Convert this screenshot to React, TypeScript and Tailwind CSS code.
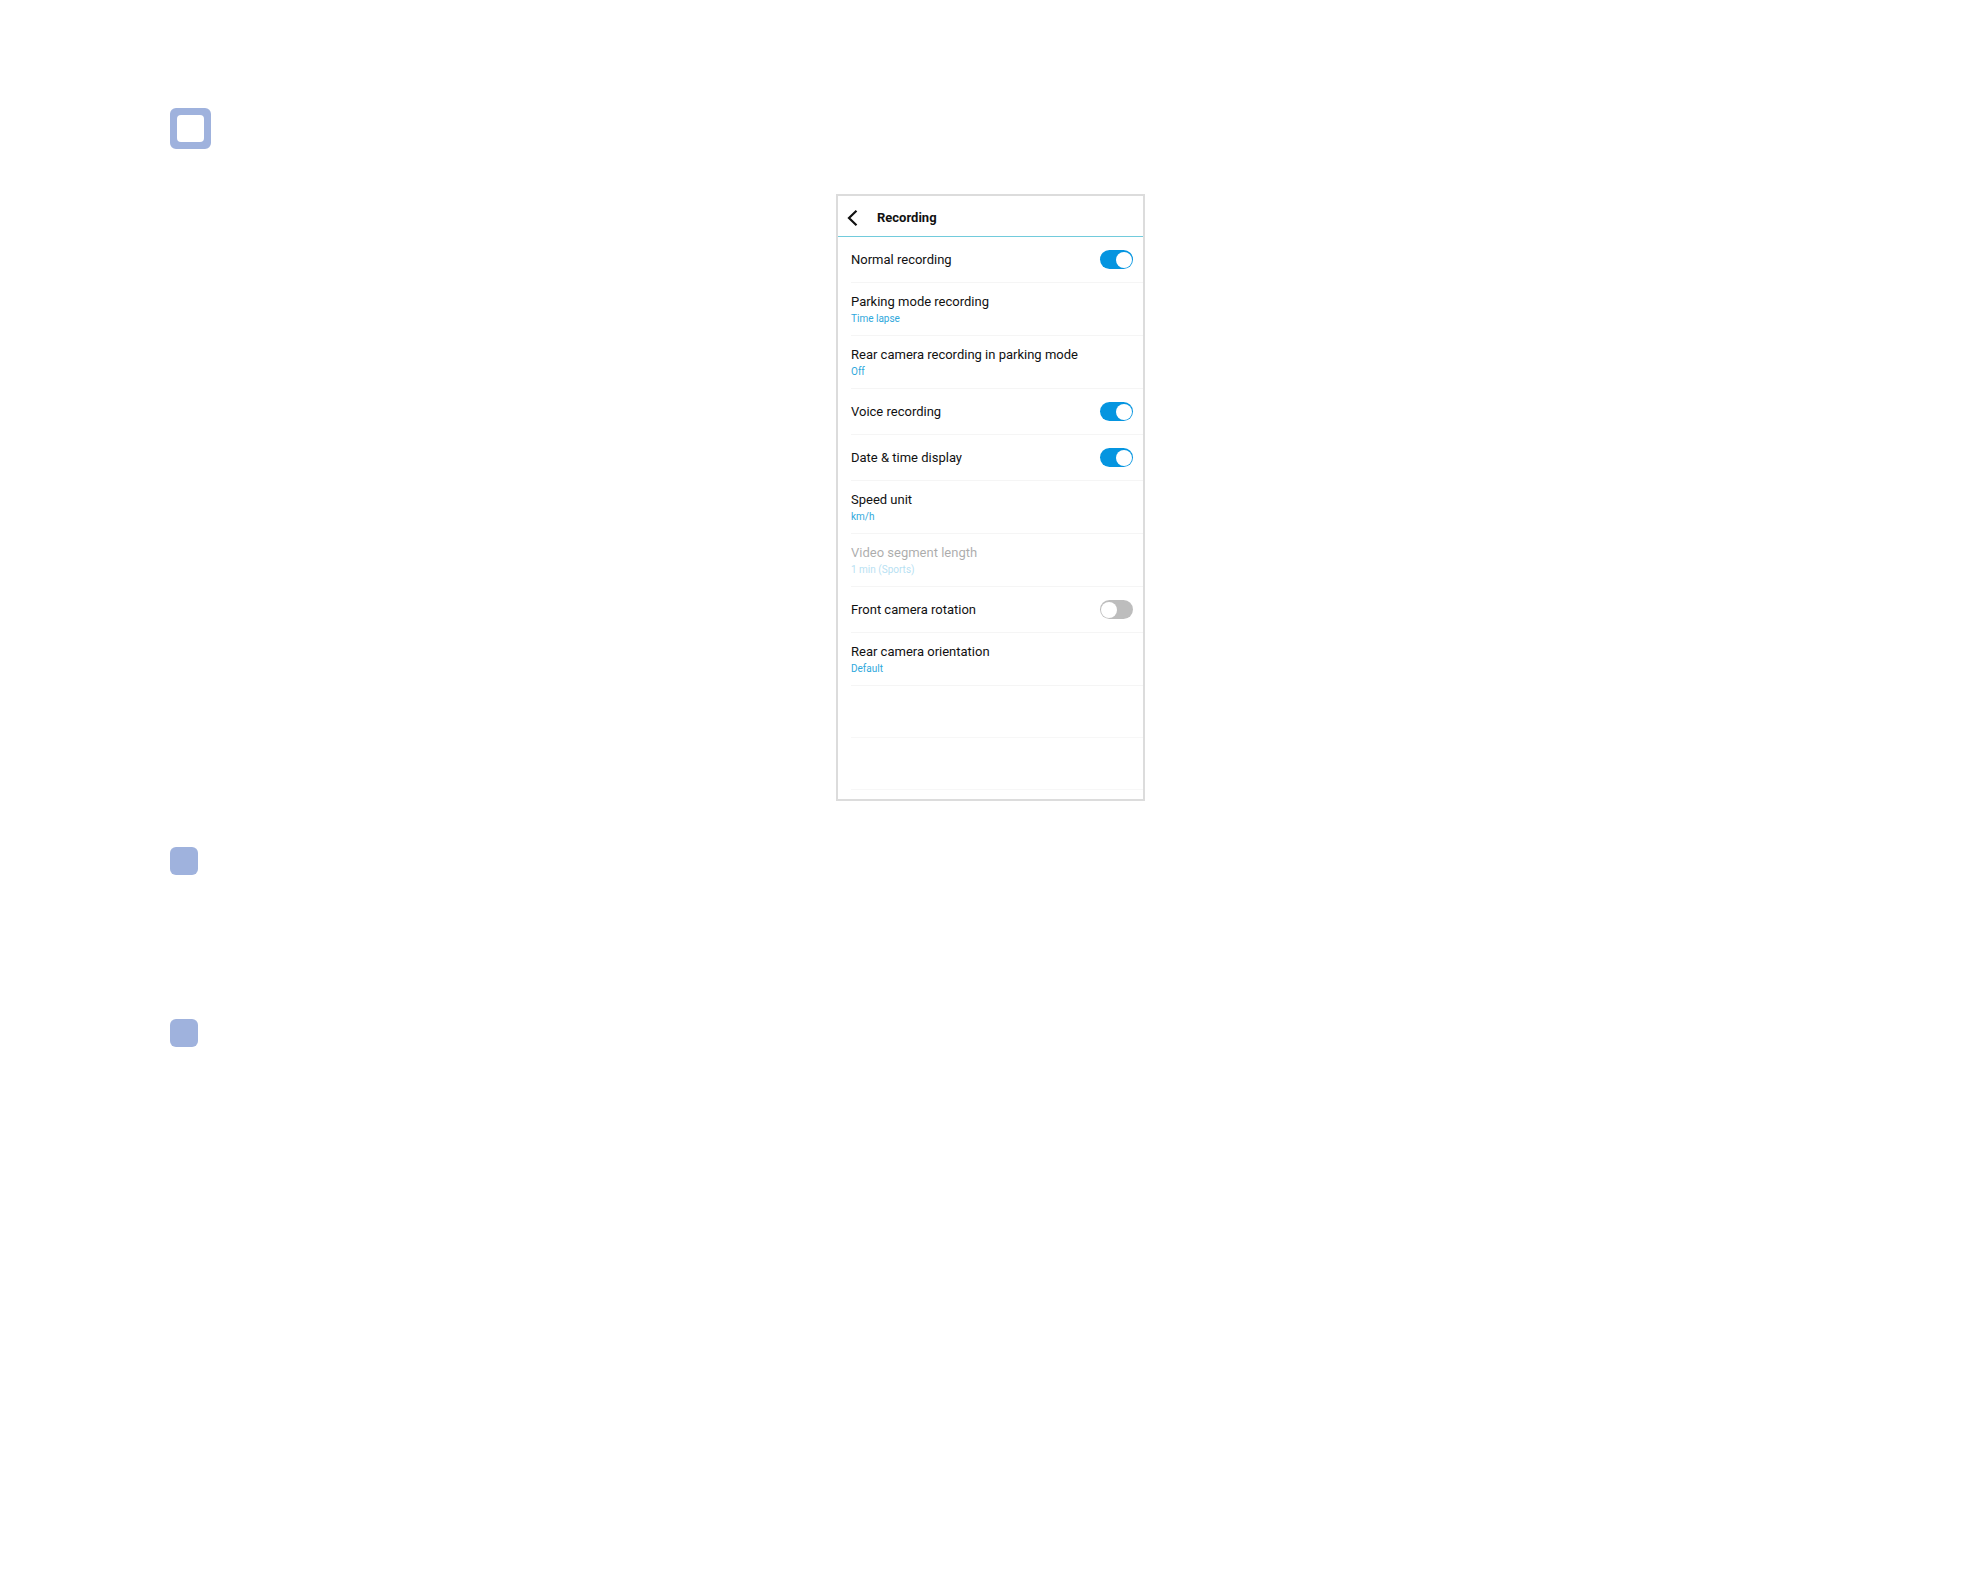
import React, { useState } from 'react';

type Setting = {
  id: string;
  label: string;
  value?: string;
  on?: boolean;
  disabled?: boolean;
};

const settings: Setting[] = [
  { id: 'normal', label: 'Normal recording', on: true },
  { id: 'parking', label: 'Parking mode recording', value: 'Time lapse' },
  { id: 'rear-parking', label: 'Rear camera recording in parking mode', value: 'Off' },
  { id: 'voice', label: 'Voice recording', on: true },
  { id: 'date-time', label: 'Date & time display', on: true },
  { id: 'speed', label: 'Speed unit', value: 'km/h' },
  { id: 'segment', label: 'Video segment length', value: '1 min (Sports)', disabled: true },
  { id: 'front-rotation', label: 'Front camera rotation', on: false },
  { id: 'rear-orientation', label: 'Rear camera orientation', value: 'Default' },
];

function SwitchRow({ id, label, on }: Setting) {
  const [checked, setChecked] = useState(Boolean(on));

  return (
    <li className="flex h-[46px] items-center justify-between border-b border-[#f5f5f5] pr-[10px]">
      <label htmlFor={id} className="text-[13px] leading-4 text-[#111]">{label}</label>
      <input
        id={id}
        type="checkbox"
        role="switch"
        checked={checked}
        onChange={(e) => setChecked(e.target.checked)}
        className="flex h-[19px] w-[33px] shrink-0 appearance-none items-center rounded-full bg-[#bdbdbd] px-px before:block before:size-4 before:rounded-full before:bg-white checked:justify-end checked:bg-[#0595e0]"
      />
    </li>
  );
}

function ValueRow({ label, value, disabled }: Setting) {
  return (
    <li className="h-[53px] border-b border-[#f5f5f5]">
      <button type="button" disabled={disabled} className="flex h-full w-full flex-col justify-center gap-px pt-[3px] text-left disabled:opacity-35">
        <span className="text-[13px] leading-4 text-[#111]">{label}</span>
        <span className="text-[10px] leading-4 text-[#2fa8dc]">{value}</span>
      </button>
    </li>
  );
}

export default function App() {
  return (
    <main className="min-h-screen bg-white pt-[108px] pr-[173px] pb-16 pl-[170px] font-['Roboto','Liberation_Sans',sans-serif]">
      <div className="size-[41px] rounded-md border-[7px] border-[#9fb2dd] bg-[#9fb2dd]" aria-hidden="true">
        <div className="size-full rounded-[4px] bg-white" />
      </div>

      <section className="mx-auto mt-[45px] w-[309px] border-2 border-[#dcdcdc] bg-white pb-[9px]" aria-labelledby="screen-title">
        <header className="flex h-[41px] items-center border-b border-[#72cbdc] pt-[3px] pl-[9px]">
          <button type="button" aria-label="Back" className="mr-[19px] flex size-[11px] items-center justify-center">
            <svg className="h-4 w-[11px] shrink-0" viewBox="0 0 11 16" fill="none" stroke="#111" strokeWidth="2.2" aria-hidden="true">
              <path d="M9.5 .8 2 8l7.5 7.2" />
            </svg>
          </button>
          <h1 id="screen-title" className="text-[13px] leading-4 font-bold text-[#111]">Recording</h1>
        </header>

        <ul className="ml-[13px]">
          {settings.map((setting) =>
            setting.value ? <ValueRow key={setting.id} {...setting} /> : <SwitchRow key={setting.id} {...setting} />
          )}
          {/* Empty rows at the end of the list */}
          <li className="h-[52px] border-b border-[#f7f7f7]" aria-hidden="true" />
          <li className="h-[52px] border-b border-[#f7f7f7]" aria-hidden="true" />
        </ul>
      </section>

      {/* Section markers */}
      <div className="mt-[46px] size-7 rounded-md bg-[#9fb2dd]" aria-hidden="true" />
      <div className="mt-[144px] size-7 rounded-md bg-[#9fb2dd]" aria-hidden="true" />
    </main>
  );
}
